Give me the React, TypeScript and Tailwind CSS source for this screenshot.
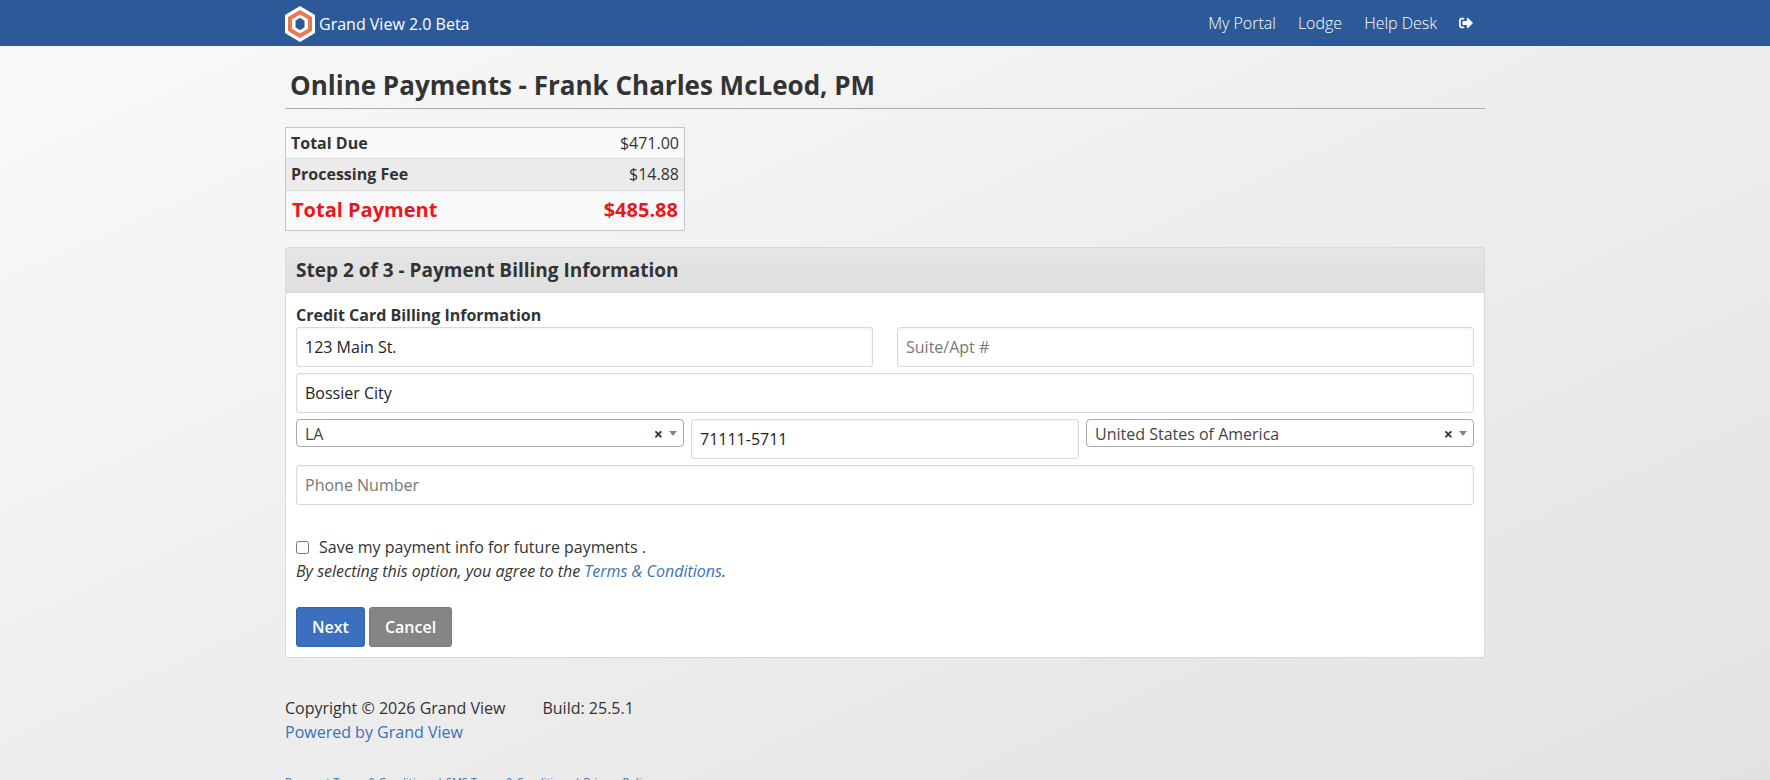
import React from 'react'
import { FaSignOutAlt } from 'react-icons/fa'

interface TextFieldProps {
  id: string
  label: string
  value?: string
  placeholder?: string
}

const TextField: React.FC<TextFieldProps> = ({ id, label, value, placeholder }) => {
  return (
    <input
      id={id}
      type="text"
      aria-label={label}
      defaultValue={value}
      placeholder={placeholder}
      className="block h-10 w-full rounded-[3px] border border-[#d9d9d9] bg-white px-2 text-base text-[#222] shadow-[inset_0_1px_3px_rgba(0,0,0,0.06)] placeholder:text-[#777]"
    />
  )
}

interface SelectFieldProps {
  id: string
  label: string
  options: string[]
}

const SelectField: React.FC<SelectFieldProps> = ({ id, label, options }) => {
  return (
    <div className="relative h-7">
      <select
        id={id}
        aria-label={label}
        className="block h-7 w-full appearance-none rounded border border-[#aaa] bg-white pt-0.5 pl-2 pr-10 text-base leading-6 text-[#444]"
      >
        {options.map((option) => (
          <option key={option}>{option}</option>
        ))}
      </select>
      {/* clear + arrow */}
      <button
        type="button"
        aria-label={`Clear ${label}`}
        className="absolute top-0.5 bottom-0 right-[21px] flex items-center text-base font-bold text-[#333]"
      >
        ×
      </button>
      <span className="pointer-events-none absolute right-[7px] top-3 border-x-4 border-t-5 border-x-transparent border-t-[#888]" />
    </div>
  )
}

const Logo: React.FC = () => {
  return (
    <svg width="30" height="36" viewBox="0 0 30 36" aria-hidden="true">
      <polygon points="15,0 30,9 30,27 15,36 0,27 0,9" fill="#fff" />
      <polygon points="15,4 27,11 27,25 15,32 3,25 3,11" fill="#e8794e" />
      <polygon points="15,8.5 23,13.2 23,22.8 15,27.5 7,22.8 7,13.2" fill="#fff" />
      <polygon points="15,11.8 19.5,14.8 19.5,21.2 15,24.2 10.5,21.2 10.5,14.8" fill="#2c5a98" />
    </svg>
  )
}

const App: React.FC = () => {
  return (
    <div className="min-h-screen bg-linear-to-br from-[#fafafa] to-[#e2e2e2] font-['Open_Sans',sans-serif] text-base text-[#333]">
      <header className="h-[46px] bg-[#2c5a98] text-white">
        <div className="mx-auto flex h-full max-w-[1200px] items-center justify-between">
          <a href="#" className="flex items-center gap-1 pt-0.5">
            <Logo />
            <span>Grand View 2.0 Beta</span>
          </a>
          <nav className="flex items-center gap-[22px] pr-3 font-light">
            <a href="#">My Portal</a>
            <a href="#">Lodge</a>
            <a href="#">Help Desk</a>
            <a href="#" aria-label="Log out">
              <FaSignOutAlt size={14} />
            </a>
          </nav>
        </div>
      </header>

      <main className="mx-auto max-w-[1200px]">
        <h1 className="mt-5 border-b border-[#aaa] px-[5px] pb-1 pt-px text-[26px] leading-[37px] font-bold">
          Online Payments - Frank Charles McLeod, PM
        </h1>

        {/* Totals */}
        <table className="mt-[18px] w-[400px] border border-[#c4c6c8] bg-[#f9f9f9]">
          <tbody>
            <tr className="h-[31px] border-b border-[#d9d9d9]">
              <th className="px-[5px] text-left font-bold">Total Due</th>
              <td className="px-[5px] text-right">$471.00</td>
            </tr>
            <tr className="h-8 border-b border-[#d9d9d9] bg-[#ebebeb]">
              <th className="px-[5px] pb-px text-left font-bold">Processing Fee</th>
              <td className="px-[5px] pb-px text-right">$14.88</td>
            </tr>
            <tr className="h-10 text-xl text-[#e8171e]">
              <th className="px-1.5 pb-0.5 text-left font-bold">Total Payment</th>
              <td className="px-1.5 pb-0.5 text-right font-bold">$485.88</td>
            </tr>
          </tbody>
        </table>

        {/* Billing form */}
        <section className="mt-4 rounded-[3px] border border-[#d9d9d9] bg-white">
          <h2 className="border-b border-[#d9d9d9] bg-linear-to-b from-[#e5e5e5] to-[#dfdfdf] px-2.5 py-2 text-[19px] leading-7 font-bold">
            Step 2 of 3 - Payment Billing Information
          </h2>
          <form className="px-2.5 pt-2.5 pb-2.5">
            <h3 className="leading-6 font-bold">Credit Card Billing Information</h3>
            <div className="grid gap-[6px]">
              <div className="grid grid-cols-2 gap-6">
                <TextField id="address" label="Address" value="123 Main St." />
                <TextField id="suite" label="Suite" placeholder="Suite/Apt #" />
              </div>
              <TextField id="city" label="City" value="Bossier City" />
              <div className="grid grid-cols-3 gap-[7px]">
                <SelectField id="state" label="State" options={['LA']} />
                <TextField id="zip" label="Zip code" value="71111-5711" />
                <SelectField id="country" label="Country" options={['United States of America']} />
              </div>
              <TextField id="phone" label="Phone Number" placeholder="Phone Number" />
            </div>

            <div className="mt-[30px] leading-6">
              <div className="flex items-center gap-2.5">
                <input id="save" type="checkbox" className="size-[13px]" />
                <label htmlFor="save">Save my payment info for future payments .</label>
              </div>
              <p className="italic">
                By selecting this option, you agree to the <a href="#" className="text-[#3a70be]">Terms &amp; Conditions</a>.
              </p>
            </div>

            <div className="mt-6 flex gap-1 font-semibold text-white">
              <button type="button" className="h-10 rounded-[3px] border border-[#3465ad] bg-[#3a70be] px-[15px]">Next</button>
              <button type="button" className="h-10 rounded-[3px] border border-[#7b7b7b] bg-[#858585] px-[15px]">Cancel</button>
            </div>
          </form>
        </section>
      </main>

      <footer className="mx-auto mt-[38px] max-w-[1200px] leading-6">
        <div className="flex gap-[37px]">
          <span>Copyright © 2026 Grand View</span>
          <span>Build: 25.5.1</span>
        </div>
        <a href="#" className="text-[#3a70be]">Powered by Grand View</a>
        <div className="mt-[26px] text-[11px] leading-6 text-[#3a70be]">
          <a href="#">Payment Terms &amp; Conditions</a> | <a href="#">SMS Terms &amp; Conditions</a> | <a href="#">Privacy Policy</a>
        </div>
      </footer>
    </div>
  )
}

export default App
